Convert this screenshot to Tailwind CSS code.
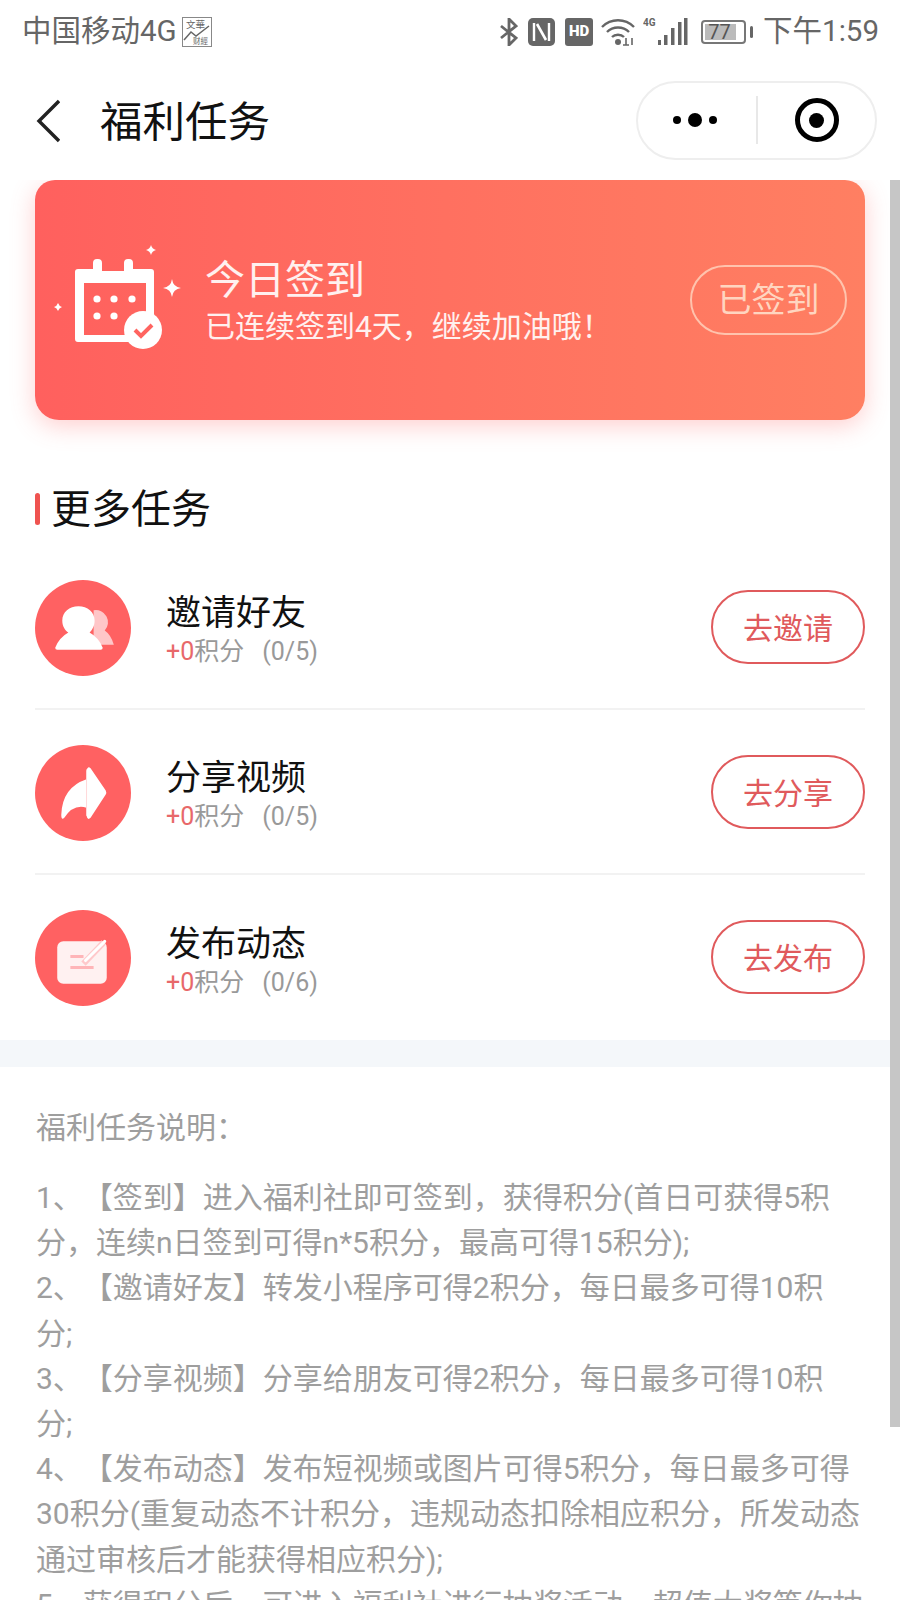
<!DOCTYPE html>
<html lang="zh-CN">
<head>
    <meta charset="UTF-8">
    <meta name="viewport" content="width=device-width, initial-scale=1.0">
    <title>福利任务</title>
    <script src="https://cdn.jsdelivr.net/npm/@tailwindcss/browser@4"></script>
</head>
<body class="relative h-[1600px] overflow-hidden bg-white font-['Roboto','Noto_Sans_CJK_SC',sans-serif] [text-spacing-trim:space-all]">

    <!-- status bar -->
    <div class="relative z-10 flex h-[62px] items-center justify-between bg-white pl-[22px] pr-[21px] pt-[1px] text-[#666]">
        <div class="flex items-center">
            <span class="text-[29.5px] leading-none">中国移动4G</span>
            <svg class="ml-[5px]" width="30" height="30" viewBox="0 0 30 30">
                <rect x="0.5" y="0.5" width="29" height="29" fill="white" stroke="#888"/>
                <text x="4" y="11" font-size="9.5" fill="#666">文華</text>
                <polyline points="2,23 9,15 14,19 27,9" fill="none" stroke="#666" stroke-width="1.5"/>
                <text x="11" y="27" font-size="7.5" fill="#666">财經</text>
            </svg>
        </div>
        <div class="flex items-center">
            <svg width="18" height="28" viewBox="0 0 18 28" fill="none" stroke="#666" stroke-width="2.8">
                <path d="M1 8l15 12-7 7V1l7 7L1 20"/>
            </svg>
            <svg class="ml-[10px]" width="27" height="28" viewBox="0 0 27 28">
                <rect width="27" height="28" rx="5" fill="#666"/>
                <path d="M6 5v18M21 5v18" stroke="white" stroke-width="2.4"/>
                <path d="M9 6l9 16" fill="none" stroke="white" stroke-width="2.6"/>
            </svg>
            <div class="ml-[10px] flex h-[28px] w-[28px] items-center justify-center rounded-[3px] bg-[#666] text-[15px] font-black leading-none text-white">HD</div>
            <svg class="ml-[8px]" width="34" height="28" viewBox="0 0 34 28" fill="none" stroke="#666" stroke-width="2.4">
                <path d="M1 9c9-9 23-9 32 0M6 14c6-6 16-6 22 0M11 19c3-3 9-3 12 0"/>
                <circle cx="17" cy="24" r="3" fill="#666" stroke="none"/>
                <path d="M25 20v7M28 27h-6M31 20v7" stroke-width="1.6"/>
            </svg>
            <svg class="ml-[8px]" width="45" height="29" viewBox="0 0 45 29">
                <text x="0" y="9" font-size="10" font-weight="700" fill="#666">4G</text>
                <rect x="15" y="23" width="3" height="5" fill="#666"/>
                <rect x="21" y="18" width="3.500" height="10" fill="#666"/>
                <rect x="28" y="11" width="3.500" height="17" fill="#666"/>
                <rect x="35" y="5" width="3.500" height="23" fill="#666"/>
                <rect x="41" y="1" width="3.500" height="27" fill="#666"/>
            </svg>
            <div class="relative ml-[13px] flex h-[24px] w-[45px] items-center justify-center rounded-[4px] border-2 border-[#777] text-[20px] leading-none text-[#555]">
                <div class="absolute inset-y-[2px] left-[2px] w-[31px] bg-[#bbb]"></div>
                <span class="relative -ml-[8px]">77</span>
            </div>
            <div class="ml-[4px] h-[12px] w-[3px] rounded-full bg-[#666]"></div>
            <span class="ml-[10px] text-[29.5px] leading-none">下午1:59</span>
        </div>
    </div>

    <!-- nav -->
    <div class="relative z-10 flex h-[118px] items-center bg-white pl-[36px] pr-[23px]">
        <svg width="24" height="44" viewBox="0 0 24 44" fill="none" stroke="#222" stroke-width="3.4">
            <path d="M23 2L3 22l20 20"/>
        </svg>
        <h1 class="ml-[40px] mt-[4px] text-[42.5px] font-normal leading-none text-[#111]">福利任务</h1>
        <div class="mb-[2px] ml-auto flex h-[79px] w-[241px] items-center rounded-full border-2 border-[#eee] bg-white">
            <div class="flex w-[118px] items-center justify-center gap-[7px] pr-[4px]">
                <span class="h-[8px] w-[8px] rounded-full bg-black"></span>
                <span class="h-[14px] w-[14px] rounded-full bg-black"></span>
                <span class="h-[8px] w-[8px] rounded-full bg-black"></span>
            </div>
            <div class="h-[48px] w-[2px] bg-[#e8e8e8]"></div>
            <div class="flex flex-1 items-center justify-center">
                <div class="flex h-[44px] w-[44px] items-center justify-center rounded-full border-[5px] border-black">
                    <span class="h-[15px] w-[15px] rounded-full bg-black"></span>
                </div>
            </div>
        </div>
    </div>

    <!-- check-in card -->
    <div class="mx-[35px] flex h-[240px] w-[830px] items-center rounded-b-[24px] rounded-t-[20px] bg-gradient-to-r from-[#ff605e] to-[#ff7f62] shadow-[0_6px_24px_rgba(255,97,95,0.3)]">
        <svg class="ml-[17px] mt-[-2px] shrink-0" width="130" height="112" viewBox="0 0 130 112">
            <path fill="white" fill-rule="evenodd" d="M26 26h15v-6q0-4 4-4h1q4 0 4 4v8h22v-8q0-4 4-4h1q4 0 4 4v6h18q3 0 3 3v67q0 3-3 3H26q-3 0-3-3V29q0-3 3-3zM32 40v52h62V40z"/>
            <circle cx="45" cy="56" r="3.600" fill="white"/>
            <circle cx="62" cy="56" r="3.600" fill="white"/>
            <circle cx="80" cy="56" r="3.600" fill="white"/>
            <circle cx="45" cy="73" r="3.600" fill="white"/>
            <circle cx="62" cy="73" r="3.600" fill="white"/>
            <circle cx="91" cy="87" r="19" fill="white"/>
            <path d="M83 87l6 6 11-11" fill="none" stroke="#ff6460" stroke-width="4"/>
            <path fill="white" d="M99 2q1 4 5 5q-4 1-5 5q-1-4-5-5q4-1 5-5z"/>
            <path fill="white" d="M120 36q1 8 9 9q-8 1-9 9q-1-8-9-9q8-1 9-9z"/>
            <path fill="white" d="M6 60q1 3 4 4q-3 1-4 4q-1-3-4-4q3-1 4-4z"/>
        </svg>
        <div class="ml-[23px] mt-[4px]">
            <div class="text-[40px] leading-[46px] text-white/90">今日签到</div>
            <div class="mt-[4px] text-[30px] leading-[38px] text-white/90">已连续签到4天，继续加油哦！</div>
        </div>
        <div class="ml-auto mr-[18px] flex h-[70px] w-[157px] items-center justify-center rounded-full border-2 border-[#ffd5c0]/80 text-[34px] leading-none text-[#ffd5c0]">已签到</div>
    </div>

    <!-- more tasks -->
    <div class="mx-[35px] mt-[70px] flex items-center">
        <div class="h-[32px] w-[5px] rounded-sm bg-[#ef5350]"></div>
        <h2 class="ml-[11px] pt-[3px] text-[40px] font-normal leading-[34px] text-[#111]">更多任务</h2>
    </div>

    <div class="mx-[35px] mt-[20px] w-[830px]">
        <div class="mb-[2px] flex h-[163px] items-center border-b-2 border-[#f2f2f2]">
            <svg width="96" height="96" viewBox="0 0 95 95" class="shrink-0">
                <circle cx="47.5" cy="47.5" r="47.5" fill="#ff6162"/>
                <path fill="#ffc6c8" d="M58 30a12 12 0 0 1 11 20q6 4 9 14H58z"/>
                <path fill="white" d="M43 26c9 0 16 6 16 14 0 6-3 10-5 12q9 5 13 15q0 2-2 2H22q-2 0-2-2q4-10 13-15c-3-2-6-6-6-12 0-8 7-14 16-14z"/>
            </svg>
            <div class="ml-[35px] mt-[6px]">
                <div class="text-[35px] leading-[40px] text-[#111]">邀请好友</div>
                <div class="mt-[3px] text-[25px] leading-[30px] text-[#999]"><span class="text-[#e8686a]">+0</span>积分<span class="ml-[18px]">(0/5)</span></div>
            </div>
            <div class="mb-[1px] ml-auto flex h-[74px] w-[154px] items-center justify-center rounded-full border-2 border-[#e05a5c] pt-[4px] text-[30px] leading-none text-[#e05a5c]">去邀请</div>
        </div>
        <div class="mb-[2px] flex h-[163px] items-center border-b-2 border-[#f2f2f2]">
            <svg width="96" height="96" viewBox="0 0 95 95" class="shrink-0">
                <circle cx="47.5" cy="47.5" r="47.5" fill="#ff6162"/>
                <path fill="white" d="M52 23q1-2 3 0l15 22q1 2 0 4L55 72q-3 3-4-2v-8q-13-4-22 10q-3 3-3-3q1-27 25-35V24z"/>
                <path d="M51 25v45" stroke="#ffd9da" stroke-width="1"/>
            </svg>
            <div class="ml-[35px] mt-[6px]">
                <div class="text-[35px] leading-[40px] text-[#111]">分享视频</div>
                <div class="mt-[3px] text-[25px] leading-[30px] text-[#999]"><span class="text-[#e8686a]">+0</span>积分<span class="ml-[18px]">(0/5)</span></div>
            </div>
            <div class="mb-[1px] ml-auto flex h-[74px] w-[154px] items-center justify-center rounded-full border-2 border-[#e05a5c] pt-[4px] text-[30px] leading-none text-[#e05a5c]">去分享</div>
        </div>
        <div class="flex h-[163px] items-center border-b-2 border-transparent">
            <svg width="96" height="96" viewBox="0 0 95 95" class="shrink-0">
                <circle cx="47.5" cy="47.5" r="47.5" fill="#ff6162"/>
                <rect x="22" y="31" width="49" height="42" rx="6" fill="#fff1f1"/>
                <path d="M35 46h13M35 57h23" stroke="#ffb5b8" stroke-width="3"/>
                <path d="M48 53l20-21" stroke="#ffc9cb" stroke-width="6"/>
                <path d="M50 50l19-19" stroke="white" stroke-width="3" stroke-linecap="round"/>
            </svg>
            <div class="ml-[35px] mt-[8px]">
                <div class="text-[35px] leading-[40px] text-[#111]">发布动态</div>
                <div class="mt-[3px] text-[25px] leading-[30px] text-[#999]"><span class="text-[#e8686a]">+0</span>积分<span class="ml-[18px]">(0/6)</span></div>
            </div>
            <div class="mb-[1px] ml-auto flex h-[74px] w-[154px] items-center justify-center rounded-full border-2 border-[#e05a5c] pt-[4px] text-[30px] leading-none text-[#e05a5c]">去发布</div>
        </div>
    </div>

    <div class="h-[27px] bg-[#f4f7fa]"></div>

    <!-- rules -->
    <div class="px-[36px] pt-[38px] text-[#9e9e9e]">
        <p class="text-[30px] leading-[45px]">福利任务说明：</p>
        <div class="mt-[25px] whitespace-nowrap text-[30px] leading-[45.2px]">
            <p>1、【签到】进入福利社即可签到，获得积分(首日可获得5积</p>
            <p>分，连续n日签到可得n*5积分，最高可得15积分);</p>
            <p>2、【邀请好友】转发小程序可得2积分，每日最多可得10积</p>
            <p>分;</p>
            <p>3、【分享视频】分享给朋友可得2积分，每日最多可得10积</p>
            <p>分;</p>
            <p>4、【发布动态】发布短视频或图片可得5积分，每日最多可得</p>
            <p>30积分(重复动态不计积分，违规动态扣除相应积分，所发动态</p>
            <p>通过审核后才能获得相应积分);</p>
            <p>5、获得积分后，可进入福利社进行抽奖活动，超值大奖等你抽</p>
        </div>
    </div>

    <!-- scrollbar -->
    <div class="absolute right-0 top-[180px] h-[1247px] w-[10px] bg-[#c6c6c6]"></div>
</body>
</html>
